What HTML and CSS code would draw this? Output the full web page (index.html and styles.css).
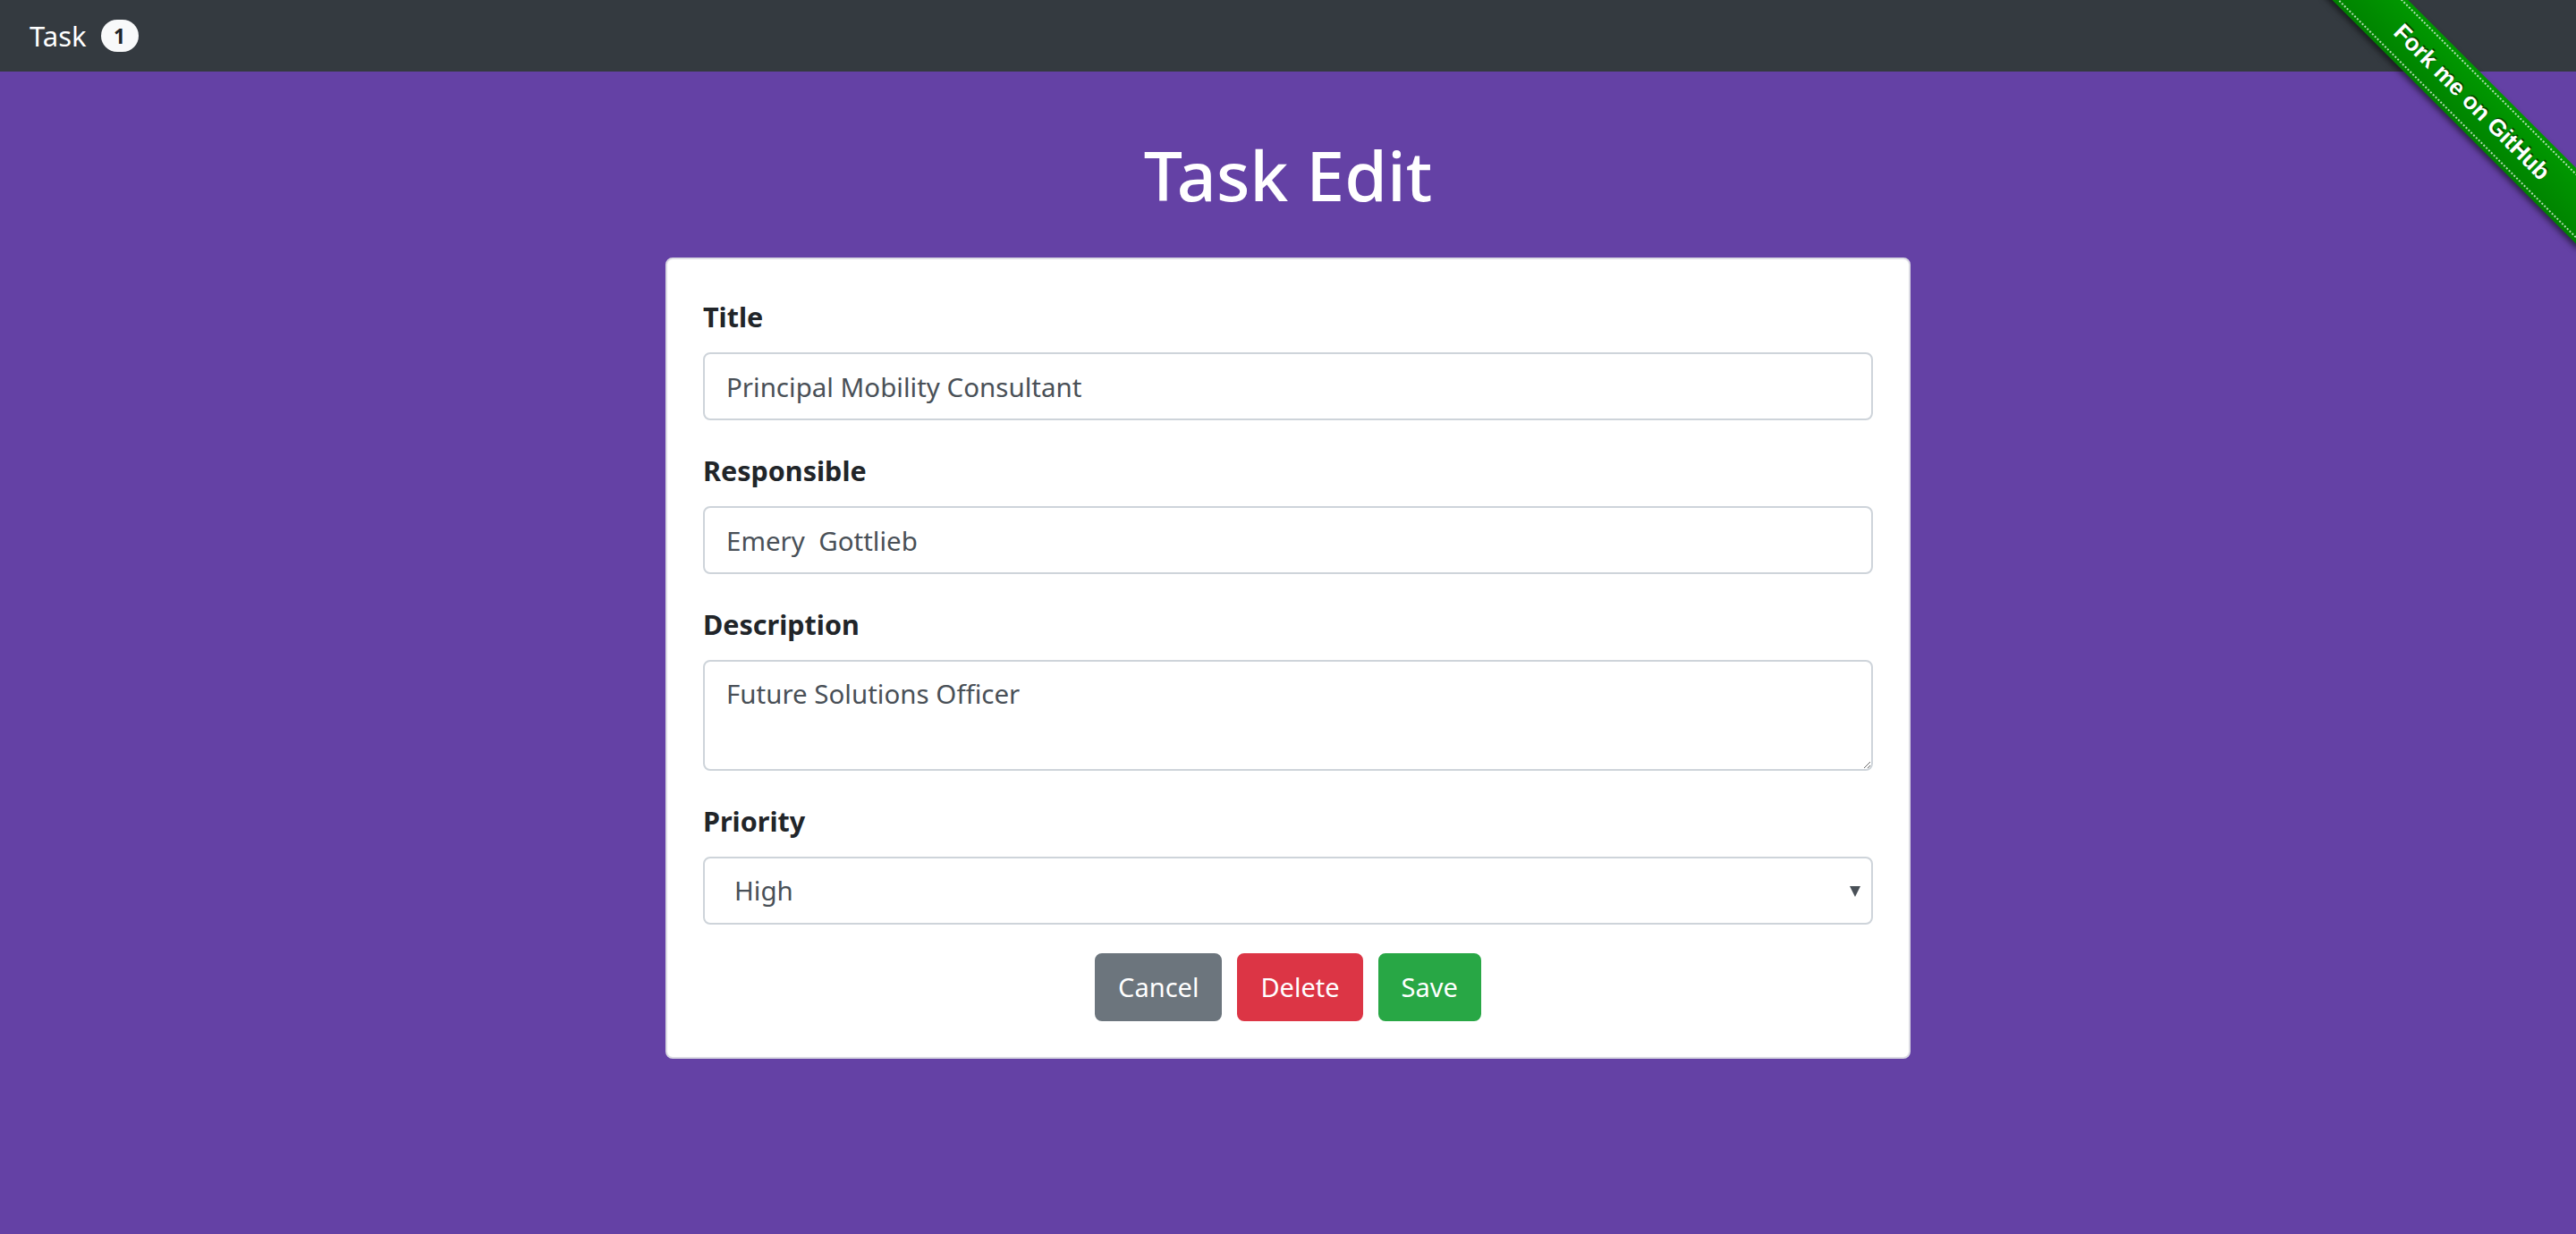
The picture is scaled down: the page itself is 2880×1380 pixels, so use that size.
FILE: index.html
```html
<!DOCTYPE html>
<html lang="en">
<head>
<meta charset="utf-8">
<title>Task Edit</title>
<link rel="stylesheet" href="styles.css">
</head>
<body>
<nav class="navbar">
  <span class="brand">Task</span>
  <span class="badge">1</span>
</nav>
<a class="fork-ribbon" href="#"><span class="ribbon-band"><span class="ribbon-text">Fork me on GitHub</span></span></a>
<main class="page">
  <h1 class="page-title">Task Edit</h1>
  <div class="card">
    <form class="task-form">
      <div class="form-group">
        <label class="form-label" for="title">Title</label>
        <input class="form-control" id="title" type="text" value="Principal Mobility Consultant">
      </div>
      <div class="form-group">
        <label class="form-label" for="resp">Responsible</label>
        <input class="form-control" id="resp" type="text" value="Emery  Gottlieb">
      </div>
      <div class="form-group">
        <label class="form-label" for="desc">Description</label>
        <textarea class="form-control form-textarea" id="desc" rows="2">Future Solutions Officer</textarea>
      </div>
      <div class="form-group">
        <label class="form-label" for="prio">Priority</label>
        <div class="select-wrap">
          <select class="form-control form-select" id="prio">
            <option>Low</option>
            <option>Medium</option>
            <option selected>High</option>
          </select>
        </div>
      </div>
      <div class="actions">
        <button type="button" class="btn btn-secondary">Cancel</button>
        <button type="button" class="btn btn-danger">Delete</button>
        <button type="button" class="btn btn-success">Save</button>
      </div>
    </form>
  </div>
</main>
</body>
</html>
```
FILE: styles.css
```css
* { box-sizing: border-box; }
html, body { margin: 0; }
body {
  background: #6441a5;
  font-family: "Noto Sans", "Open Sans", sans-serif;
  color: #212529;
  min-height: 1380px;
}
.navbar {
  height: 80px;
  background: #343a40;
  display: flex;
  align-items: center;
  padding: 0 33px;
  gap: 16px;
}
.brand {
  color: #fff;
  font-size: 31px;
  line-height: 1;
}
.badge {
  display: inline-flex;
  align-items: center;
  justify-content: center;
  width: 42px;
  height: 36px;
  border-radius: 18px;
  background: #f8f9fa;
  color: #212529;
  font-weight: 700;
  font-size: 23px;
}
.page {
  display: flex;
  flex-direction: column;
  align-items: center;
}
.page-title {
  margin: 68px 0 44px;
  font-size: 77px;
  line-height: 96px;
  font-weight: 500;
  color: #fff;
}
.card {
  width: 1392px;
  background: #fff;
  border: 2px solid #dcdce4;
  border-radius: 8px;
  padding: 40px;
}
.form-group { margin-bottom: 32px; }
.form-label {
  display: block;
  font-size: 30.5px;
  line-height: 48px;
  font-weight: 700;
  margin-bottom: 16px;
}
.form-control {
  display: block;
  width: 100%;
  height: 76px;
  padding: 12px 24px;
  font-family: inherit;
  font-size: 29.5px;
  line-height: 48px;
  color: #495057;
  background: #fff;
  border: 2px solid #ced4da;
  border-radius: 8px;
  outline: none;
}
.form-textarea {
  height: 124px;
  resize: vertical;
}
.select-wrap { position: relative; }
.form-select {
  appearance: none;
  -webkit-appearance: none;
  padding-left: 33px;
}
.select-wrap::after {
  content: "";
  position: absolute;
  right: 14px;
  top: 33px;
  border-left: 6px solid transparent;
  border-right: 6px solid transparent;
  border-top: 12px solid #495057;
}
.actions {
  display: flex;
  justify-content: center;
  gap: 17px;
}
.btn {
  height: 76px;
  padding: 12px 24px;
  font-family: inherit;
  font-size: 29px;
  line-height: 48px;
  color: #fff;
  border: 2px solid transparent;
  border-radius: 8px;
}
.btn-secondary { background: #6c757d; border-color: #6c757d; }
.btn-danger { background: #dc3545; border-color: #dc3545; }
.btn-success { background: #28a745; border-color: #28a745; }

.fork-ribbon {
  position: absolute;
  top: 0;
  right: 0;
  width: 315px;
  height: 315px;
  overflow: hidden;
  font-size: 26px;
  text-decoration: none;
  z-index: 10;
}
.ribbon-band {
  position: absolute;
  display: block;
  width: 15.38em;
  top: 3.23em;
  right: -3.23em;
  padding: .15em 0;
  box-sizing: content-box;
  transform: rotate(45deg);
  background-color: #090;
  background-image: linear-gradient(to bottom, rgba(0,0,0,0), rgba(0,0,0,.15));
  box-shadow: 0 .15em .23em 0 rgba(0,0,0,.5);
}
.ribbon-text {
  display: block;
  color: #fff;
  font: 700 1em "Liberation Sans", Arial, sans-serif;
  line-height: 1.54em;
  height: 1.54em;
  box-sizing: content-box;
  text-shadow: 0 -.08em rgba(0,0,0,.5);
  text-align: center;
  padding: .15em 0;
  border-width: .08em 0;
  border-style: dotted;
  border-color: rgba(255,255,255,.7);
}
```
